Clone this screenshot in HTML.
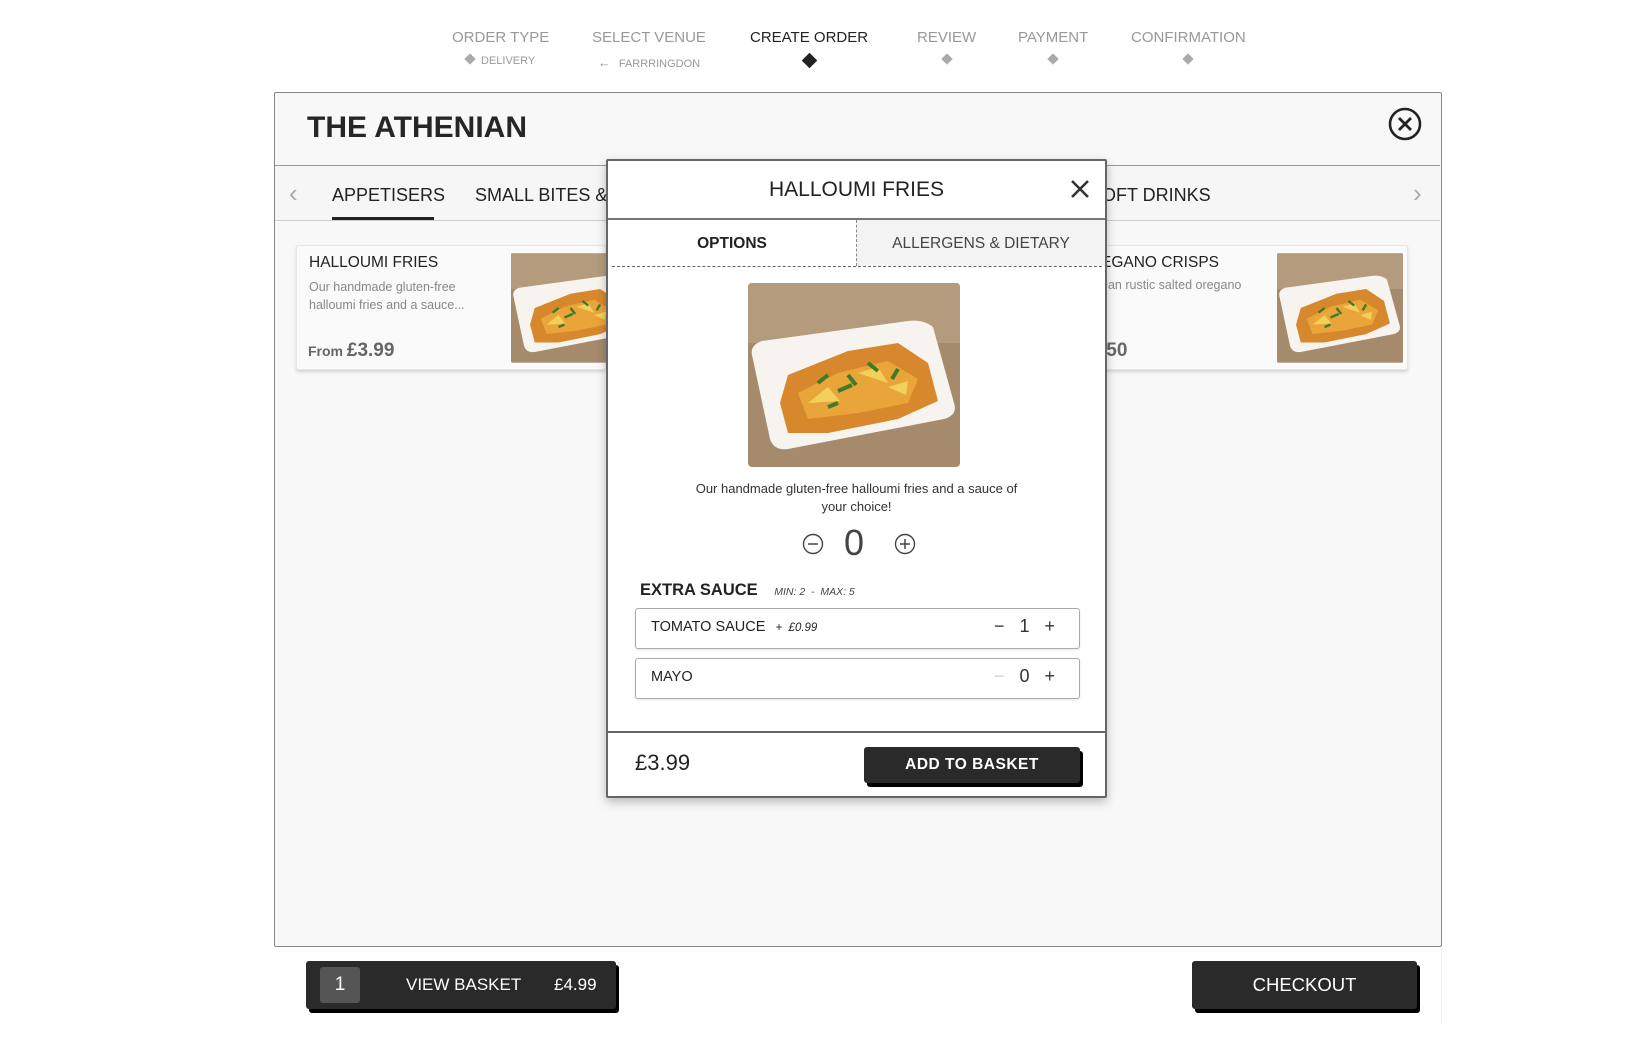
<!DOCTYPE html>
<html><head><meta charset="utf-8">
<style>
*{box-sizing:border-box;margin:0;padding:0}
body{width:1651px;height:1050px;background:#fff;font-family:"Liberation Sans",sans-serif;color:#2a2a2a;position:relative;overflow:hidden}
.abs{position:absolute}
.step{position:absolute;top:29px;font-size:15px;color:#999;text-align:center;white-space:nowrap}
.step .sub{font-size:11px;margin-top:9px;color:#999}
.dia{display:inline-block;width:8px;height:8px;background:#aaa;transform:rotate(45deg);margin-right:7px;vertical-align:1px}
#panel{left:274px;top:92px;width:1168px;height:855px;background:#f8f8f8;border:1.5px solid #888;border-radius:2px}
.card{position:absolute;background:#fafafa;border:1px solid #e6e6e6;box-shadow:0 2px 3px rgba(0,0,0,.15);border-radius:2px}
.btn{position:absolute;background:#2a2a2a;color:#fff;border-radius:3px;box-shadow:3px 4px 0 #000}
</style></head><body>

<div class="step" style="left:452px">ORDER TYPE<div class="sub"><span class="dia"></span>DELIVERY</div></div>
<div class="step" style="left:592px">SELECT VENUE<div class="sub"><span style="font-size:13px;margin-right:8px">&#8592;</span>FARRRINGDON</div></div>
<div class="step" style="left:750px;color:#222">CREATE ORDER<div class="sub"><span class="dia" style="width:11px;height:11px;background:#222;margin:0"></span></div></div>
<div class="step" style="left:917px">REVIEW<div class="sub"><span class="dia" style="margin:0"></span></div></div>
<div class="step" style="left:1018px">PAYMENT<div class="sub"><span class="dia" style="margin:0"></span></div></div>
<div class="step" style="left:1131px">CONFIRMATION<div class="sub"><span class="dia" style="margin:0"></span></div></div>

<svg width="0" height="0" style="position:absolute"><defs>
<symbol id="food" viewBox="0 0 212 184">
<rect width="212" height="184" fill="#a58a6c"/>
<rect y="0" width="212" height="60" fill="#b49b7e"/>
<path d="M4 72 Q2 62 14 58 L160 38 Q175 36 185 44 L206 120 Q210 132 196 136 L40 166 Q26 168 22 156 Z" fill="#f7f4ef"/>
<path d="M40 92 L100 68 L150 60 L180 80 L190 118 L150 136 L80 150 L40 150 L32 120 Z" fill="#d8882c"/>
<path d="M50 110 L90 90 L140 78 L170 96 L160 120 L110 130 L60 136 Z" fill="#e9a43a"/>
<path d="M60 120 L80 104 L92 118 Z M110 90 L130 84 L140 100 Z M140 104 L160 98 L158 112 Z" fill="#f3d05a"/>
<path d="M70 100 l10 -8 M90 108 l14 -6 M120 80 l10 8 M100 92 l8 10 M150 86 l-6 10 M80 124 l10 -4" stroke="#3d7a2a" stroke-width="4"/>
</symbol></defs></svg>

<div id="panel" class="abs">
  <div class="abs" style="left:32px;top:18px;font-size:30px;font-weight:bold;color:#262626">THE ATHENIAN</div>
  <svg class="abs" style="left:1113px;top:14px" width="34" height="34" viewBox="0 0 34 34"><circle cx="17" cy="17" r="15" fill="none" stroke="#222" stroke-width="2.6"/><path d="M11 11 L23 23 M23 11 L11 23" stroke="#222" stroke-width="2.8"/></svg>
  <div class="abs" style="left:0;top:72px;width:1165px;height:56px;border-top:1.5px solid #999;border-bottom:1.5px solid #ccc;background:#f6f6f6"></div>
  <div class="abs" style="left:14px;top:85px;font-size:26px;color:#aaa">&#8249;</div>
  <div class="abs" style="left:1138px;top:85px;font-size:26px;color:#aaa">&#8250;</div>
  <div class="abs" style="left:57px;top:92px;font-size:18px;color:#222">APPETISERS</div>
  <div class="abs" style="left:57px;top:124px;width:102px;height:3px;background:#222"></div>
  <div class="abs" style="left:200px;top:92px;font-size:18px;color:#222">SMALL BITES &amp;</div>
  <div class="abs" style="left:815px;top:92px;font-size:18px;color:#222">SOFT DRINKS</div>

  <div class="card" style="left:21px;top:152px;width:310px;height:125px">
    <div class="abs" style="left:12px;top:8px;font-size:15.5px;color:#222">HALLOUMI FRIES</div>
    <div class="abs" style="left:12px;top:32px;font-size:12.5px;line-height:18px;color:#888">Our handmade gluten-free<br>halloumi fries and a sauce...</div>
    <div class="abs" style="left:11px;top:94px;font-size:14px;font-weight:bold;color:#666">From <span style="font-size:19px">£3.99</span></div>
    <svg class="abs" style="left:214px;top:6px;border-radius:3px" width="126" height="112"><use href="#food" width="126" height="112"/></svg>
  </div>
  <div class="card" style="left:825px;top:152px;width:308px;height:125px">
    <div class="abs" style="left:0;top:8px;font-size:15.5px;color:#222">EGANO CRISPS</div>
    <div class="abs" style="left:0;top:32px;font-size:12.5px;color:#888">ean rustic salted oregano</div>
    <div class="abs" style="left:0;top:94px;font-size:19px;font-weight:bold;color:#666">.50</div>
    <svg class="abs" style="left:176px;top:6px;border-radius:3px" width="126" height="112"><use href="#food" width="126" height="112"/></svg>
  </div>
</div>

<!-- modal -->
<div class="abs" style="left:606px;top:159px;width:501px;height:639px;background:#fff;border:2px solid #666;border-radius:2px;box-shadow:0 4px 10px rgba(0,0,0,.25)">
  <div class="abs" style="left:0;top:17px;width:497px;text-align:center;font-size:21px;color:#222">HALLOUMI FRIES</div>
  <svg class="abs" style="left:462px;top:18px" width="20" height="20"><path d="M2 2 L18 18 M18 2 L2 18" stroke="#333" stroke-width="2.6"/></svg>
  <div class="abs" style="left:0;top:57px;width:497px;height:1.5px;background:#777"></div>
  <div class="abs" style="left:4px;top:105px;width:490px;border-top:1.5px dashed #666"></div>
  <div class="abs" style="left:248px;top:59px;height:46px;border-left:1.5px dashed #888"></div>
  <div class="abs" style="left:249px;top:59px;width:248px;height:46px;background:#f3f3f3"></div>
  <div class="abs" style="left:0;top:74px;width:248px;text-align:center;font-size:15.5px;font-weight:bold;color:#222">OPTIONS</div>
  <div class="abs" style="left:249px;top:74px;width:248px;text-align:center;font-size:15.5px;color:#444">ALLERGENS &amp; DIETARY</div>
  <svg class="abs" style="left:140px;top:122px;border-radius:4px" width="212" height="184"><use href="#food" width="212" height="184"/></svg>
  <div class="abs" style="left:80px;top:319px;width:337px;text-align:center;font-size:13px;line-height:18px;color:#333">Our handmade gluten-free halloumi fries and a sauce of your choice!</div>
  <svg class="abs" style="left:194px;top:372px" width="22" height="22"><circle cx="11" cy="11" r="9.5" fill="none" stroke="#444" stroke-width="1.4"/><path d="M6 11 H16" stroke="#444" stroke-width="1.5"/></svg>
  <div class="abs" style="left:226px;top:361px;width:40px;text-align:center;font-size:36px;color:#444">0</div>
  <svg class="abs" style="left:286px;top:372px" width="22" height="22"><circle cx="11" cy="11" r="9.5" fill="none" stroke="#444" stroke-width="1.4"/><path d="M6 11 H16 M11 6 V16" stroke="#444" stroke-width="1.5"/></svg>
  <div class="abs" style="left:32px;top:420px;font-size:16.5px;color:#222;white-space:nowrap"><b style="font-weight:600">EXTRA SAUCE</b> <i style="font-size:10.5px;color:#444;margin-left:12px">MIN: 2 &nbsp;- &nbsp;MAX: 5</i></div>
  <div class="abs" style="left:27px;top:447px;width:445px;height:41px;border:1.5px solid #aaa;border-radius:3px;box-shadow:0 1px 2px rgba(0,0,0,.1)">
    <div class="abs" style="left:15px;top:10px;font-size:14.5px;color:#222">TOMATO SAUCE <i style="font-size:11.5px;margin-left:6px">+ &nbsp;£0.99</i></div>
    <div class="abs" style="left:358px;top:7px;font-size:18px;color:#333;word-spacing:10px">− 1 +</div>
  </div>
  <div class="abs" style="left:27px;top:497px;width:445px;height:41px;border:1.5px solid #aaa;border-radius:3px;box-shadow:0 1px 2px rgba(0,0,0,.1)">
    <div class="abs" style="left:15px;top:10px;font-size:14.5px;color:#222">MAYO</div>
    <div class="abs" style="left:358px;top:7px;font-size:18px;color:#333;word-spacing:10px"><span style="color:#ccc">−</span> 0 +</div>
  </div>
  <div class="abs" style="left:0;top:570px;width:497px;height:1.5px;background:#666"></div>
  <div class="abs" style="left:27px;top:589px;font-size:22px;color:#222">£3.99</div>
  <div class="btn" style="left:256px;top:586px;width:216px;height:36px;text-align:center;font-size:15.5px;font-weight:bold;line-height:36px;letter-spacing:.5px">ADD TO BASKET</div>
</div>

<div class="abs" style="left:274px;top:948px;width:1168px;height:76px;background:#fff;border-right:1px solid #eee"></div>
<div class="btn" style="left:306px;top:961px;width:310px;height:48px">
  <div class="abs" style="left:14px;top:6px;width:40px;height:36px;background:#555;border-radius:3px;text-align:center;line-height:36px;font-size:19px">1</div>
  <div class="abs" style="left:100px;top:14px;font-size:17px">VIEW BASKET</div>
  <div class="abs" style="left:248px;top:14px;font-size:17px">£4.99</div>
</div>
<div class="btn" style="left:1192px;top:961px;width:225px;height:48px;text-align:center;line-height:48px;font-size:18.5px">CHECKOUT</div>
</body></html>
